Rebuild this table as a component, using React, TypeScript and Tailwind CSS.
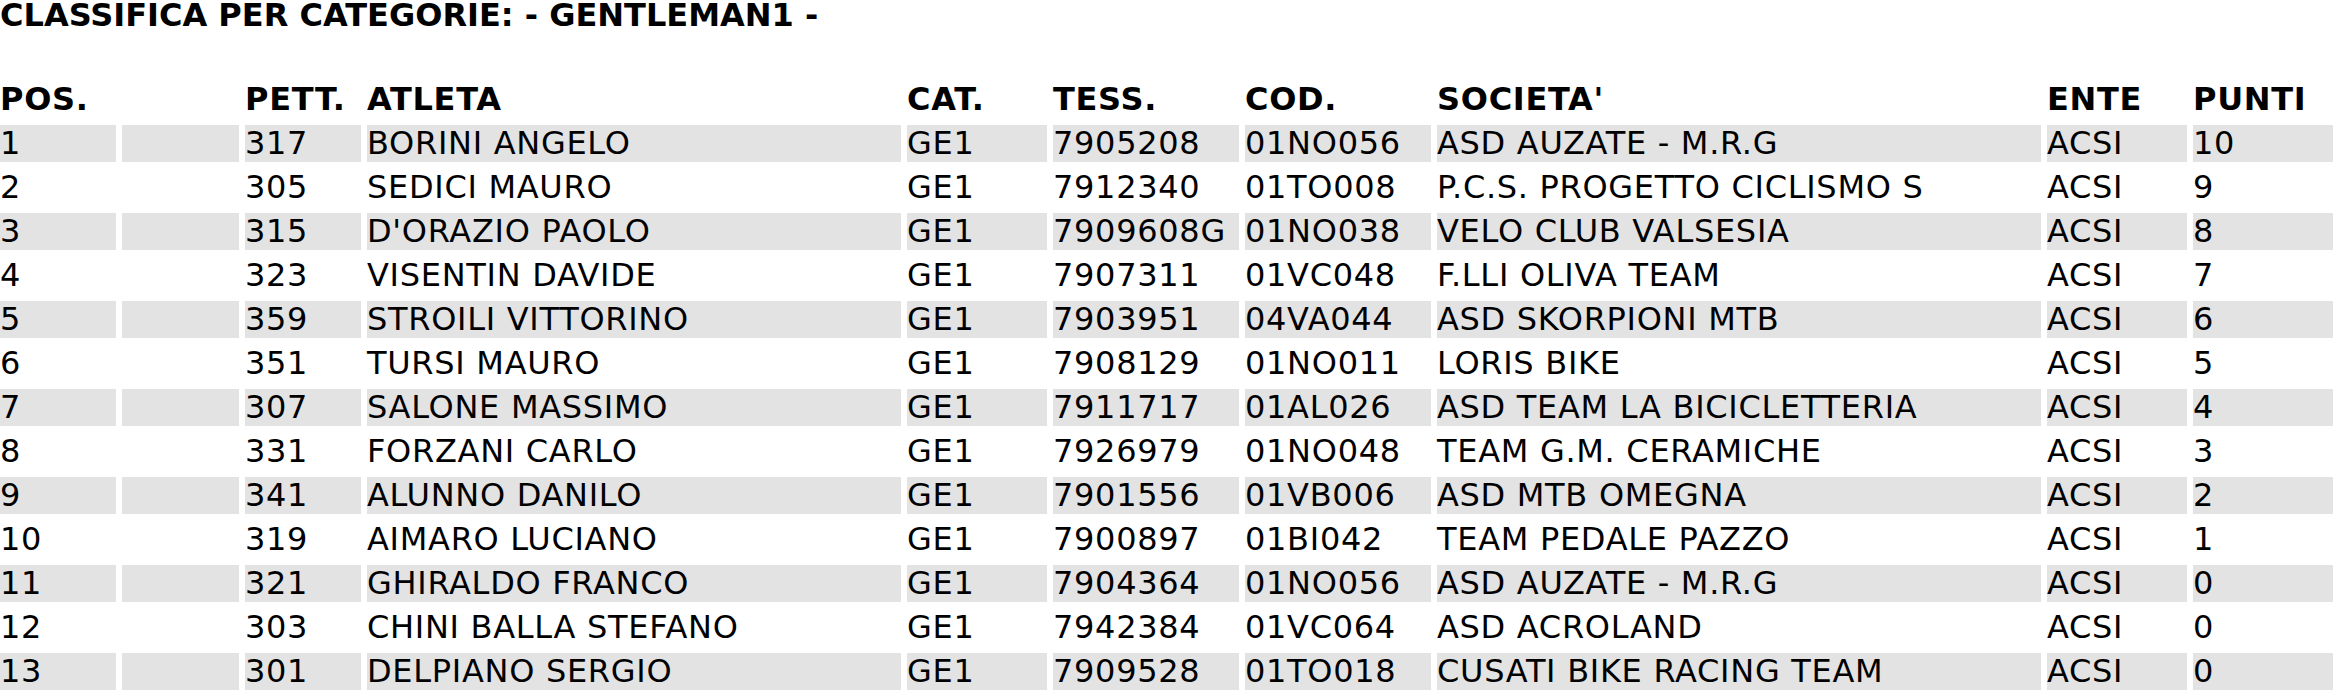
const headers = ['POS.', '', 'PETT.', 'ATLETA', 'CAT.', 'TESS.', 'COD.', "SOCIETA'", 'ENTE', 'PUNTI'];

const rows: string[][] = [
  ['1', '', '317', 'BORINI ANGELO', 'GE1', '7905208', '01NO056', 'ASD AUZATE - M.R.G', 'ACSI', '10'],
  ['2', '', '305', 'SEDICI MAURO', 'GE1', '7912340', '01TO008', 'P.C.S. PROGETTO CICLISMO S', 'ACSI', '9'],
  ['3', '', '315', "D'ORAZIO PAOLO", 'GE1', '7909608G', '01NO038', 'VELO CLUB VALSESIA', 'ACSI', '8'],
  ['4', '', '323', 'VISENTIN DAVIDE', 'GE1', '7907311', '01VC048', 'F.LLI OLIVA TEAM', 'ACSI', '7'],
  ['5', '', '359', 'STROILI VITTORINO', 'GE1', '7903951', '04VA044', 'ASD SKORPIONI MTB', 'ACSI', '6'],
  ['6', '', '351', 'TURSI MAURO', 'GE1', '7908129', '01NO011', 'LORIS BIKE', 'ACSI', '5'],
  ['7', '', '307', 'SALONE MASSIMO', 'GE1', '7911717', '01AL026', 'ASD TEAM LA BICICLETTERIA', 'ACSI', '4'],
  ['8', '', '331', 'FORZANI CARLO', 'GE1', '7926979', '01NO048', 'TEAM G.M. CERAMICHE', 'ACSI', '3'],
  ['9', '', '341', 'ALUNNO DANILO', 'GE1', '7901556', '01VB006', 'ASD MTB OMEGNA', 'ACSI', '2'],
  ['10', '', '319', 'AIMARO LUCIANO', 'GE1', '7900897', '01BI042', 'TEAM PEDALE PAZZO', 'ACSI', '1'],
  ['11', '', '321', 'GHIRALDO FRANCO', 'GE1', '7904364', '01NO056', 'ASD AUZATE - M.R.G', 'ACSI', '0'],
  ['12', '', '303', 'CHINI BALLA STEFANO', 'GE1', '7942384', '01VC064', 'ASD ACROLAND', 'ACSI', '0'],
  ['13', '', '301', 'DELPIANO SERGIO', 'GE1', '7909528', '01TO018', 'CUSATI BIKE RACING TEAM', 'ACSI', '0'],
];

export default function App() {
  return (
    <div className="bg-white text-black font-['DejaVu_Sans',sans-serif] text-[32px]">
      <div className="-mt-[3px] font-bold leading-[37px] whitespace-nowrap">
        CLASSIFICA PER CATEGORIE: - GENTLEMAN1 -
      </div>

      <div className="mt-[47px] grid grid-cols-[116px_117px_116px_534px_140px_186px_186px_604px_140px_1fr] gap-x-[6px] gap-y-[7px] tracking-[0.7px]">
        {headers.map((h, i) => (
          <div key={`h${i}`} className="h-[37px] leading-[37px] font-bold whitespace-nowrap">
            {h}
          </div>
        ))}
        {rows.map((r, ri) =>
          r.map((c, ci) => (
            <div
              key={`${ri}-${ci}`}
              className={`h-[37px] leading-[37px] whitespace-nowrap ${ri % 2 === 0 ? 'bg-[#e3e3e3]' : ''}`}
            >
              {c}
            </div>
          ))
        )}
      </div>
    </div>
  );
}
